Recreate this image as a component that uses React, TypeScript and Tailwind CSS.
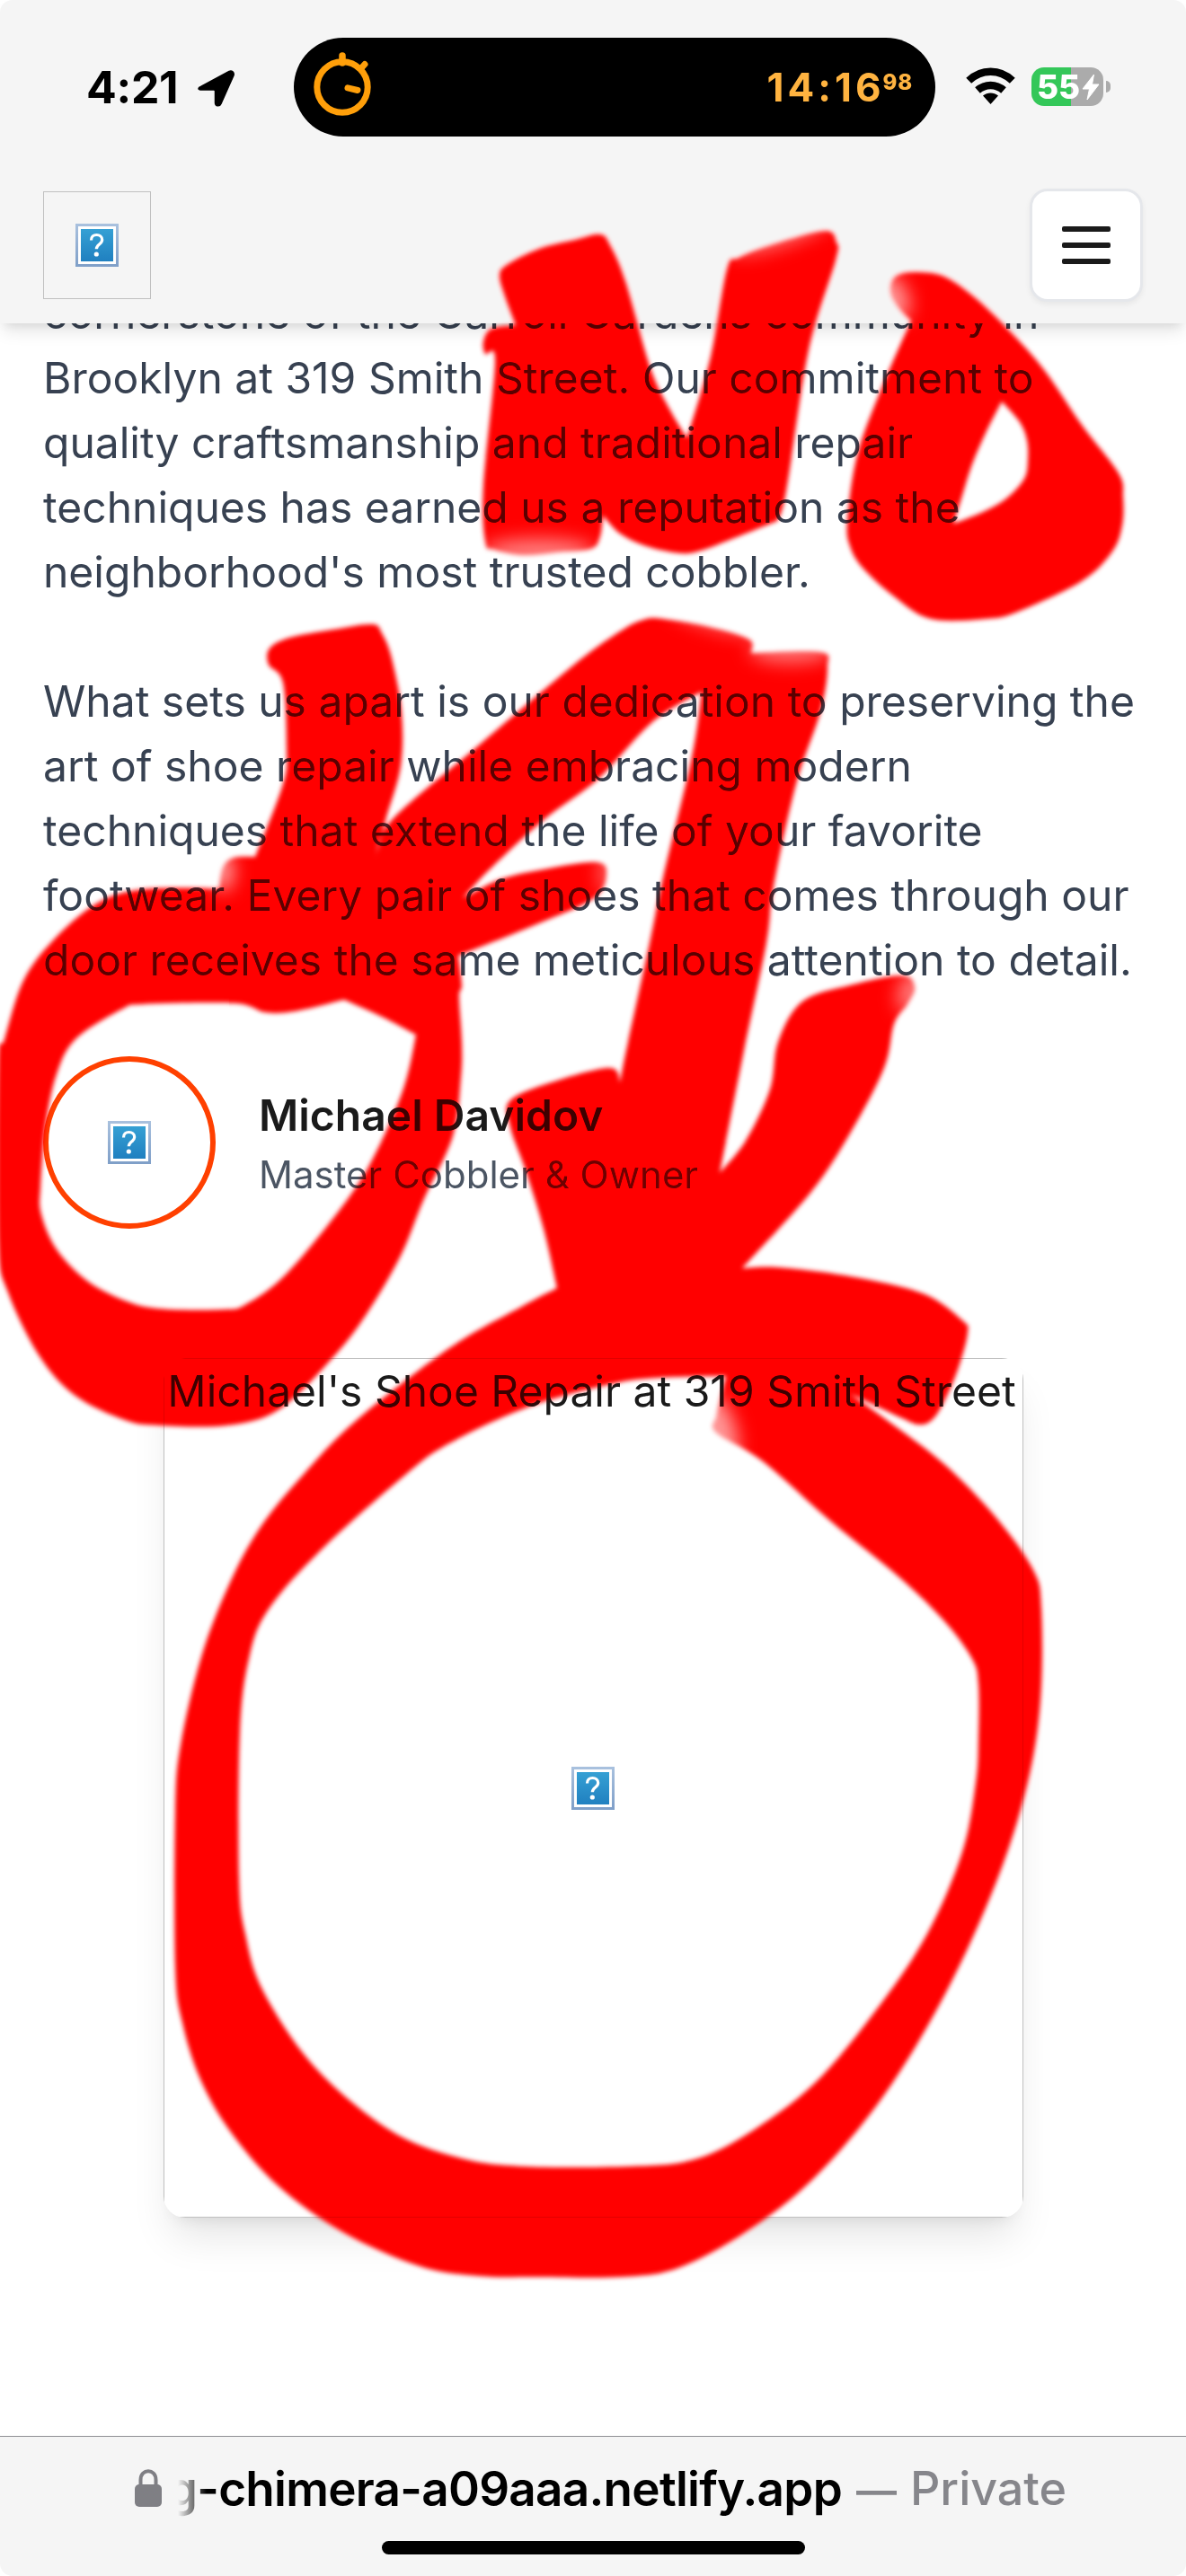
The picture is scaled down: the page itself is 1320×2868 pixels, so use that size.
import React from "react";

type Point = [number, number];

// Closed smooth outline through the points; a point given twice makes a corner.
function outline(points: Point[]): string {
  const n = points.length;
  const at = (i: number) => points[(i + n) % n];
  let d = `M${at(0)[0]} ${at(0)[1]}`;
  for (let i = 0; i < n; i++) {
    const [p0, p1, p2, p3] = [at(i - 1), at(i), at(i + 1), at(i + 2)];
    if (p1[0] === p2[0] && p1[1] === p2[1]) continue;
    d += `C${p1[0] + (p2[0] - p0[0]) / 6} ${p1[1] + (p2[1] - p0[1]) / 6} ${p2[0] - (p3[0] - p1[0]) / 6} ${p2[1] - (p3[1] - p1[1]) / 6} ${p2[0]} ${p2[1]}`;
  }
  return d + "Z";
}

const markerN: Point[] = [
  [668, 261], [679, 273], [696, 313], [724, 410], [745, 455], [764, 487], [764, 487], [768, 477], [791, 397], [809, 300],
  [822, 287], [860, 272], [918, 257], [931, 270], [930, 290], [900, 390], [875, 547], [865, 580], [865, 580],
  [820, 598], [780, 613], [757, 616], [719, 608], [690, 594], [671, 574], [671, 574], [668, 597], [658, 611],
  [620, 615], [582, 618], [550, 612], [540, 603], [538, 540], [551, 403], [540, 394], [538, 380], [547, 366], [574, 362], [574, 362],
  [562, 330], [556, 307], [564, 295], [600, 277], [640, 267],
];

const markerO: Point[] = [
  [992, 315], [1000, 306], [1020, 303], [1051, 308], [1087, 333], [1128, 373], [1163, 413], [1204, 473], [1245, 527],
  [1250, 553], [1249, 585], [1238, 614], [1204, 647], [1133, 681], [1098, 689], [1036, 689], [995, 664], [960, 632],
  [946, 608], [943, 580], [954, 507], [980, 435], [1014, 357], [1014, 357], [1002, 345], [992, 329],
];
const markerOHole: Point[] = [
  [1115, 447], [1115, 447], [1135, 470], [1143, 490], [1144, 512], [1140, 533], [1120, 555], [1094, 570], [1061, 583], [1061, 583],
  [1070, 555], [1082, 517], [1098, 480],
];

const markerArrows: Point[] = [
  [414, 695], [425, 705], [436, 733], [447, 793], [446, 853], [430, 910], [418, 955], [418, 955], [436, 913], [529, 833],
  [639, 740], [690, 703], [716, 690], [738, 689], [790, 698], [834, 712], [836, 727], [836, 727], [913, 726], [921, 743],
  [913, 793], [886, 873], [861, 987], [853, 1050], [828, 1170], [801, 1306], [801, 1306], [830, 1270], [857, 1213], [866, 1160],
  [893, 1115], [946, 1097], [1004, 1086], [1018, 1099], [1010, 1118], [995, 1140], [984, 1189], [946, 1262], [902, 1328],
  [826, 1412], [826, 1412], [866, 1411], [946, 1421], [1027, 1440], [1071, 1470], [1077, 1484], [1066, 1525], [1049, 1564],
  [1036, 1582], [1022, 1586], [1004, 1579], [960, 1558], [946, 1552], [946, 1552], [991, 1584], [1052, 1631], [1109, 1690], [1150, 1748],
  [1159, 1790], [1158, 1894], [1143, 1988], [1109, 2095], [1052, 2220], [983, 2334], [906, 2425], [830, 2485], [755, 2525],
  [692, 2535], [600, 2535], [533, 2534], [467, 2523], [383, 2486], [310, 2434], [257, 2374], [223, 2315], [203, 2252],
  [195, 2190], [195, 2017], [201, 1943], [224, 1845], [255, 1764], [290, 1700], [340, 1639], [397, 1581], [500, 1501],
  [580, 1455], [620, 1434], [620, 1434], [605, 1368], [585, 1303], [568, 1255], [568, 1225], [620, 1203], [679, 1189],
  [690, 1205], [690, 1205], [699, 1160], [723, 1050], [738, 977], [770, 843], [781, 770], [781, 770], [727, 803], [666, 867],
  [606, 912], [545, 968], [515, 1000], [515, 1000], [557, 979], [610, 967], [664, 960], [675, 973], [661, 1000], [595, 1030],
  [510, 1064], [510, 1064], [514, 1097], [511, 1110], [514, 1160], [513, 1200], [504, 1265], [471, 1337], [446, 1398],
  [408, 1463], [370, 1512], [311, 1569], [253, 1587], [177, 1587], [139, 1581], [84, 1554], [44, 1510], [9, 1439],
  [-2, 1382], [-2, 1183], [5, 1157], [26, 1092], [60, 1046], [109, 1005], [160, 990], [244, 989], [244, 989], [248, 966],
  [260, 955], [284, 954], [284, 954], [315, 873], [319, 833], [315, 760], [299, 740], [300, 722], [322, 710], [370, 701],
];
const leftLoopHole: Point[] = [
  [160, 1118], [261, 1117], [295, 1127], [328, 1126], [383, 1113], [383, 1113], [425, 1132], [463, 1152], [463, 1152], [450, 1209],
  [421, 1278], [387, 1335], [320, 1417], [274, 1452], [248, 1458], [177, 1457], [139, 1448], [97, 1426], [63, 1391],
  [46, 1352], [45, 1322], [51, 1252], [63, 1196], [84, 1157], [135, 1124],
];
const bigLoopHole: Point[] = [
  [797, 1577], [797, 1595], [849, 1627], [925, 1694], [1002, 1757], [1052, 1806], [1082, 1847], [1089, 1875], [1089, 1936], [1086, 1985],
  [1071, 2062], [1032, 2153], [975, 2238], [906, 2320], [830, 2377], [770, 2405], [700, 2412], [583, 2412], [510, 2402],
  [433, 2371], [350, 2301], [293, 2217], [273, 2153], [266, 2090], [267, 1929], [277, 1847], [298, 1793], [357, 1726],
  [450, 1643], [500, 1607], [589, 1566], [680, 1541], [732, 1534], [808, 1532], [808, 1532], [802, 1555],
];

const markerPath = [markerN, markerO, markerOHole, markerArrows, leftLoopHole, bigLoopHole].map(outline).join("");

// Places where the marker stroke starts dry: x, y, radius x, radius y, rotation, fade.
const dryTips = [
  [992, 330, 18, 28, -30, 0.6],
  [868, 262, 58, 12, -18, 0.45],
  [600, 614, 62, 14, 0, 0.5],
  [1014, 1104, 14, 24, 20, 0.5],
  [798, 1590, 20, 42, -20, 0.6],
  [248, 970, 12, 22, 0, 0.65],
  [880, 724, 46, 14, 0, 0.45],
  [676, 972, 9, 24, 0, 0.4],
  [794, 692, 50, 8, 16, 0.4],
];

function MarkerInk({ className }: { className: string }) {
  return (
    <svg className={"pointer-events-none absolute inset-0 h-[2868px] w-[1320px] " + className} viewBox="0 0 1320 2868" aria-hidden="true">
      <defs>
        <filter id="soft-edge" x="-5%" y="-5%" width="110%" height="110%">
          <feGaussianBlur stdDeviation="2.8" />
        </filter>
        <filter id="dry-blur" filterUnits="userSpaceOnUse" x="0" y="0" width="1320" height="2868">
          <feGaussianBlur stdDeviation="10" />
        </filter>
        <mask id="dry" maskUnits="userSpaceOnUse" x="0" y="0" width="1320" height="2868">
          <rect width="1320" height="2868" fill="#fff" />
          <g filter="url(#dry-blur)">
            {dryTips.map(([x, y, rx, ry, turn, fade]) => (
              <ellipse key={x} cx={x} cy={y} rx={rx} ry={ry} transform={`rotate(${turn} ${x} ${y})`} opacity={fade} fill="#000" />
            ))}
          </g>
        </mask>
      </defs>
      <g mask="url(#dry)">
        <path d={markerPath} fill="#ff0000" fillRule="evenodd" filter="url(#soft-edge)" />
      </g>
    </svg>
  );
}

function MissingImage() {
  return (
    <svg className="size-12 shrink-0" viewBox="0 0 48 48" aria-label="Missing image">
      <defs>
        <linearGradient id="mi-frame" x1="0" y1="0" x2="0" y2="1">
          <stop offset="0" stopColor="#a9c1de" />
          <stop offset="1" stopColor="#7f9fc8" />
        </linearGradient>
        <linearGradient id="mi-fill" x1="0" y1="0" x2="0" y2="1">
          <stop offset="0" stopColor="#35a0d4" />
          <stop offset="1" stopColor="#2080c0" />
        </linearGradient>
      </defs>
      <rect width="48" height="48" fill="url(#mi-frame)" />
      <rect x="3" y="3" width="42" height="42" fill="#fff" />
      <rect x="6" y="6" width="36" height="36" fill="url(#mi-fill)" />
      <path d="M17.5 18.5c0-4 2.600-6 6-6s6.200 2 6.200 5.600c0 5-6.400 5-6.400 10.200" fill="none" stroke="#fff" strokeWidth="3.200" />
      <circle cx="23.300" cy="34" r="2.600" fill="#fff" />
    </svg>
  );
}

function StatusBar() {
  return (
    <div className="flex h-[195px] items-start">
      <div className="flex h-[196px] w-[327px] items-start pl-[96px] pt-[67px]">
        <span className="text-[50px] font-bold leading-[61px] tracking-[-0.3px] text-black">4:21</span>
        <svg className="ml-auto mr-[65px] mt-[10px] h-[42px] w-[42px] shrink-0" viewBox="0 0 42 42">
          <path d="M3.500 19.500 35 2.500c3-1.500 6 1 5 4.500L26 38.500c-1.400 3.500-6.500 3-6.500-1V24.500c0-1-.5-1.500-1.500-1.500H4.500C0 23 0 21 3.500 19.500Z" fill="#000" stroke="#000" strokeWidth="1.500" strokeLinejoin="round" />
        </svg>
      </div>
      <div className="mt-[42px] flex h-[110px] w-[714px] items-start justify-between rounded-full bg-black pl-[18px] pr-[25px]">
        <svg className="mt-[12px] h-[76px] w-[72px]" viewBox="345 54 72 76" fill="none" stroke="#ff9f0a" strokeLinecap="round">
          <circle cx="381" cy="97" r="28.200" strokeWidth="7" />
          <path d="M381 62v8" strokeWidth="7.500" />
          <path d="m402 76 4-4.500" strokeWidth="7" />
          <path d="m387 97.800 11 2.700" strokeWidth="7" />
        </svg>
        <div className="flex pt-[28px] text-[#ffb340]">
          <span className="text-[44px] font-bold leading-[54px] tracking-[4px]">14:16</span>
          <span className="-ml-[2px] pt-[8px] text-[24px] font-extrabold leading-[28px] tracking-[0.8px]">98</span>
        </div>
      </div>
      <svg className="ml-[34px] mt-[75px] h-[42px] w-[55px]" viewBox="0 0 55 42">
        <path d="M27.500 41 19 31.500c5-4 12-4 17 0Z" />
        <path d="M13 25.500c8.500-7.500 20.500-7.500 29 0" fill="none" stroke="#000" strokeWidth="8.500" />
        <path d="M3.200 14.800c14-13.400 34.600-13.400 48.600 0" fill="none" stroke="#000" strokeWidth="8.500" />
      </svg>
      <div className="ml-[18px] mt-[75px] flex items-center">
        <div className="flex h-[43px] w-[80px] items-center rounded-[14px] bg-[linear-gradient(90deg,#34c759_55%,#ababab_55%)] pl-[6px]">
          <span className="text-[37px] font-extrabold leading-[43px] text-white">55</span>
          <svg className="ml-[2px] h-[30px] w-[20px] shrink-0" viewBox="0 0 20 30">
            <path d="M13.500 1 1 17h7.500L6 29 19 12h-7.500Z" fill="#fff" stroke="#fff" strokeLinejoin="round" />
          </svg>
        </div>
        <div className="ml-[3px] h-[13px] w-[5px] rounded-r-full bg-[#ababab]" />
      </div>
    </div>
  );
}

function Header() {
  return (
    <header className="relative z-10 h-[360px] rounded-t-[14px] bg-[#f5f5f5] shadow-[0_12px_18px_-3px_rgba(0,0,0,0.1),0_6px_12px_-6px_rgba(0,0,0,0.1)]">
      <StatusBar />
      <div className="flex items-center justify-between px-12 pt-[15px]">
        <div className="flex size-[120px] items-center justify-center border border-[#c0c0c0]">
          <MissingImage />
        </div>
        <button className="flex size-[126px] flex-col items-center justify-center gap-3 rounded-[20px] border-[3px] border-gray-200 bg-white shadow-[0_3px_6px_rgba(0,0,0,0.060)]">
          <span className="h-[6px] w-[54px] rounded-[2px] bg-[#1a1a1a]" />
          <span className="h-[6px] w-[54px] rounded-[2px] bg-[#1a1a1a]" />
          <span className="h-[6px] w-[54px] rounded-[2px] bg-[#1a1a1a]" />
        </button>
      </div>
    </header>
  );
}

const story = [
  ["cornerstone of the Carroll Gardens community in", "Brooklyn at 319 Smith Street. Our commitment to", "quality craftsmanship and traditional repair", "techniques has earned us a reputation as the", "neighborhood's most trusted cobbler."],
  ["What sets us apart is our dedication to preserving the", "art of shoe repair while embracing modern", "techniques that extend the life of your favorite", "footwear. Every pair of shoes that comes through our", "door receives the same meticulous attention to detail."],
];

export default function App() {
  return (
    <div className="relative isolate flex h-[2868px] w-[1320px] flex-col overflow-hidden bg-white font-['Inter',sans-serif] [font-optical-sizing:none]">
      <Header />
      <main className="-mt-[47px] flex-1 px-12 text-[48px] leading-[72px]">
        <div className="mb-[71px] flex flex-col gap-[72px]">
          {story.map((lines) => (
            <p key={lines[0]} className="text-[#374151]">
              {lines.map((line) => (
                <span key={line} className="block whitespace-nowrap">{line}</span>
              ))}
            </p>
          ))}
        </div>
        <div className="flex items-center gap-12">
          <div className="flex size-[192px] items-center justify-center rounded-full border-[6px] border-[#ff4000]">
            <MissingImage />
          </div>
          <div className="whitespace-nowrap">
            <div className="font-semibold text-[#1a1a1a]">Michael Davidov</div>
            <div className="text-[42px] leading-[60px] text-[#4b5563]">Master Cobbler &amp; Owner</div>
          </div>
        </div>
        <div className="mx-auto mt-[144px] h-[957px] w-[957px] overflow-hidden rounded-[24px] bg-white shadow-[0_30px_45px_-9px_rgba(0,0,0,0.1),0_12px_18px_-12px_rgba(0,0,0,0.1)]">
          <div className="relative flex h-full items-center justify-center border border-[#c0c0c0]">
            <span className="absolute left-0 right-[3px] top-0 whitespace-nowrap text-center text-[#1a1a1a]">Michael's Shoe Repair at 319 Smith Street</span>
            <MissingImage />
          </div>
        </div>
      </main>
      <footer className="flex h-[156px] flex-col items-center rounded-b-[14px] border-t border-[#8e8e93] bg-[#f5f5f5]">
        <div className="flex h-[116px] w-full items-start whitespace-nowrap pl-[150px] pt-[25px] text-[53px] leading-[64px]">
          <svg className="mt-[11px] h-[42px] w-[30px] shrink-0" viewBox="0 0 30 42">
            <rect y="17" width="30" height="25" rx="5" fill="#7f7f84" />
            <path d="M6.500 19V12c0-13 17-13 17 0v7" fill="none" stroke="#7f7f84" strokeWidth="4" />
          </svg>
          <div className="ml-[18px] flex w-[739px] justify-end overflow-hidden pt-px font-semibold tracking-[-0.73px] text-black [mask-image:linear-gradient(90deg,transparent,#000_32px)]">
            <span>g-chimera-a09aaa.netlify.app</span>
          </div>
          <span className="ml-[16px] pt-[3px] text-[45px] font-semibold text-[#86868b]">—</span>
          <span className="ml-[15px] pt-px text-[52px] font-medium text-[#86868b]">Private</span>
        </div>
        <div className="h-[15px] w-[471px] rounded-full bg-black" />
      </footer>
      <MarkerInk className="z-20 mix-blend-multiply" />
      <MarkerInk className="z-20 opacity-[0.137] mix-blend-plus-lighter" />
    </div>
  );
}
